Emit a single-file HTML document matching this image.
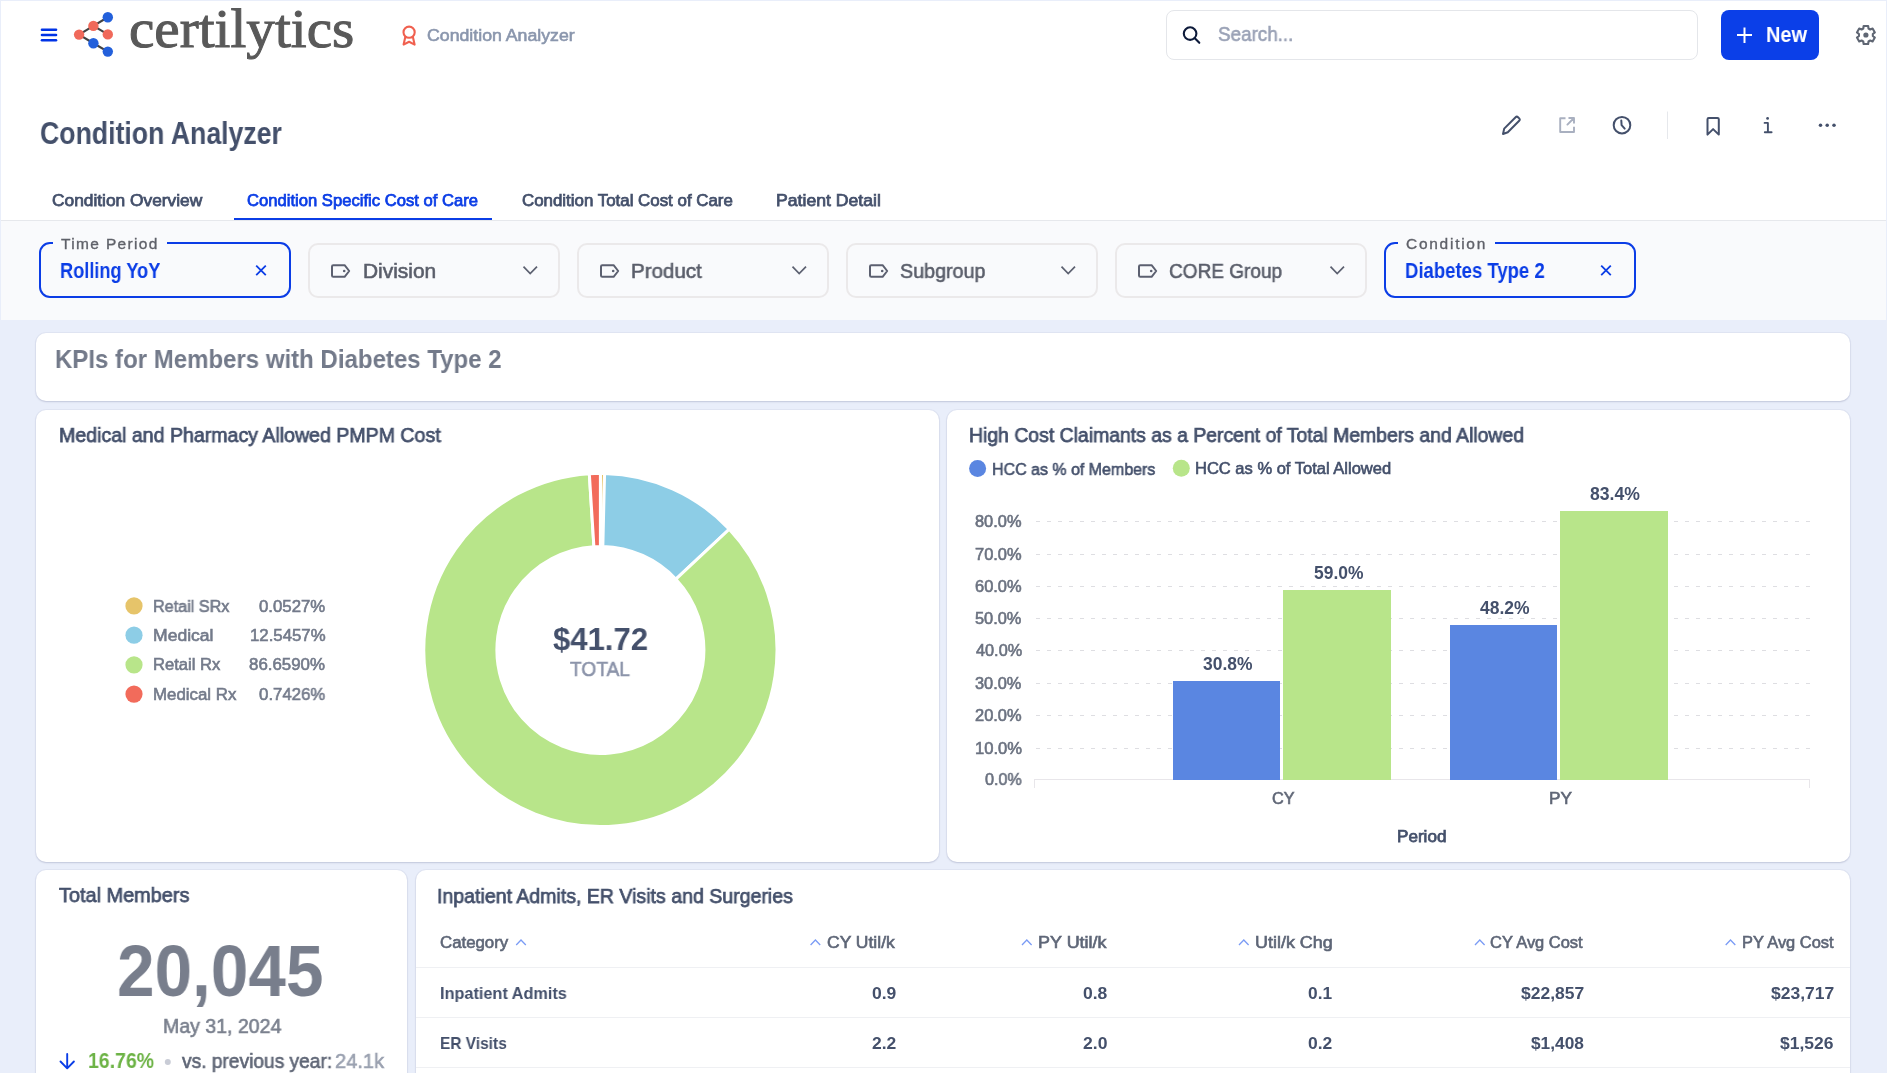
<!DOCTYPE html>
<html><head><meta charset="utf-8"><title>Condition Analyzer</title>
<style>

html,body{margin:0;padding:0;}
body{width:1887px;height:1073px;overflow:hidden;background:#e9eefa;position:relative;font-family:"Liberation Sans",sans-serif;}
.a{position:absolute;}
.t{position:absolute;white-space:nowrap;line-height:1;transform-origin:0 0;will-change:transform;}
.card{position:absolute;background:#fff;border-radius:10px;box-shadow:0 1px 2px rgba(30,40,90,0.16),0 0 0 1px rgba(30,40,90,0.035);}
svg{position:absolute;overflow:visible;}

</style></head><body>

<div class="a" style="left:1px;top:1px;width:1885px;height:219px;background:#fff;"></div>
<div class="a" style="left:1px;top:220px;width:1885px;height:1px;background:#e6e8ec;"></div>
<div class="a" style="left:1px;top:221px;width:1885px;height:99px;background:#f9fafc;"></div>
<!-- search -->
<div class="a" style="left:1166px;top:10px;width:530px;height:48px;border:1px solid #e4e6ea;border-radius:8px;background:#fff;"></div>
<div class="a" style="left:1721px;top:10px;width:98px;height:50px;border-radius:8px;background:#0b3fe8;"></div>
<!-- tab underline -->
<div class="a" style="left:234px;top:218px;width:258px;height:2px;background:#0b3de6;"></div>
<!-- filters -->
<div class="a" style="left:39px;top:242px;width:248px;height:52px;border:2px solid #0b3de6;border-radius:11px;"></div>
<div class="a" style="left:53px;top:240px;width:114px;height:5px;background:#f9fafc;"></div>
<div class="a" style="left:308px;top:243px;width:248px;height:51px;border:2px solid #ebe9ea;border-radius:10px;"></div>
<div class="a" style="left:577px;top:243px;width:248px;height:51px;border:2px solid #ebe9ea;border-radius:10px;"></div>
<div class="a" style="left:846px;top:243px;width:248px;height:51px;border:2px solid #ebe9ea;border-radius:10px;"></div>
<div class="a" style="left:1115px;top:243px;width:248px;height:51px;border:2px solid #ebe9ea;border-radius:10px;"></div>
<div class="a" style="left:1384px;top:242px;width:248px;height:52px;border:2px solid #0b3de6;border-radius:11px;"></div>
<div class="a" style="left:1398px;top:240px;width:97px;height:5px;background:#f9fafc;"></div>
<!-- cards -->
<div class="card" style="left:36px;top:333px;width:1814px;height:68px;"></div>
<div class="card" style="left:36px;top:410px;width:903px;height:452px;"></div>
<div class="card" style="left:947px;top:410px;width:903px;height:452px;"></div>
<div class="card" style="left:36px;top:870px;width:371px;height:320px;"></div>
<div class="card" style="left:416px;top:870px;width:1434px;height:320px;"></div>
<div class="a" style="left:416px;top:967px;width:1434px;height:1px;background:#eff0f3;"></div>
<div class="a" style="left:416px;top:1017px;width:1434px;height:1px;background:#eff0f3;"></div>
<div class="a" style="left:416px;top:1067px;width:1434px;height:1px;background:#eff0f3;"></div>
<svg class="a" style="left:0;top:0" width="1887" height="1073" viewBox="0 0 1887 1073"><path d="M600.40,473.35 A176.6,176.6 0 0 1 604.56,473.40 L602.84,546.48 A103.5,103.5 0 0 0 600.40,546.45 Z" fill="#e6c46a" stroke="#fff" stroke-width="3" stroke-linejoin="miter"/><path d="M604.56,473.40 A176.6,176.6 0 0 1 729.28,529.22 L675.93,579.19 A103.5,103.5 0 0 0 602.84,546.48 Z" fill="#8dcde6" stroke="#fff" stroke-width="3" stroke-linejoin="miter"/><path d="M729.28,529.22 A176.6,176.6 0 1 1 589.31,473.70 L593.90,546.65 A103.5,103.5 0 1 0 675.93,579.19 Z" fill="#b8e58a" stroke="#fff" stroke-width="3" stroke-linejoin="miter"/><path d="M589.31,473.70 A176.6,176.6 0 0 1 600.40,473.35 L600.40,546.45 A103.5,103.5 0 0 0 593.90,546.65 Z" fill="#f26b5b" stroke="#fff" stroke-width="3" stroke-linejoin="miter"/></svg>
<svg class="a" style="left:0;top:0" width="1887" height="1073" viewBox="0 0 1887 1073"><line x1="1036" y1="521.5" x2="1810" y2="521.5" stroke="#dedee2" stroke-width="1" stroke-dasharray="4 7"/><line x1="1036" y1="554.5" x2="1810" y2="554.5" stroke="#dedee2" stroke-width="1" stroke-dasharray="4 7"/><line x1="1036" y1="586.5" x2="1810" y2="586.5" stroke="#dedee2" stroke-width="1" stroke-dasharray="4 7"/><line x1="1036" y1="618.5" x2="1810" y2="618.5" stroke="#dedee2" stroke-width="1" stroke-dasharray="4 7"/><line x1="1036" y1="650.5" x2="1810" y2="650.5" stroke="#dedee2" stroke-width="1" stroke-dasharray="4 7"/><line x1="1036" y1="683.5" x2="1810" y2="683.5" stroke="#dedee2" stroke-width="1" stroke-dasharray="4 7"/><line x1="1036" y1="715.5" x2="1810" y2="715.5" stroke="#dedee2" stroke-width="1" stroke-dasharray="4 7"/><line x1="1036" y1="748.5" x2="1810" y2="748.5" stroke="#dedee2" stroke-width="1" stroke-dasharray="4 7"/><line x1="1034" y1="779.5" x2="1810" y2="779.5" stroke="#e8e6ea" stroke-width="1"/><line x1="1034.5" y1="779" x2="1034.5" y2="788" stroke="#e8e6ea" stroke-width="1"/><line x1="1809.5" y1="779" x2="1809.5" y2="788" stroke="#e8e6ea" stroke-width="1"/><rect x="1173" y="681" width="107" height="99" fill="#5a86e1"/><rect x="1283" y="590" width="108" height="190" fill="#b8e58a"/><rect x="1450" y="625" width="107" height="155" fill="#5a86e1"/><rect x="1560" y="511" width="108" height="269" fill="#b8e58a"/></svg>
<svg class="a" style="left:0;top:0" width="1887" height="1073" viewBox="0 0 1887 1073"><line x1="42" y1="29.8" x2="56" y2="29.8" stroke="#0033e6" stroke-width="2.6" stroke-linecap="round"/><line x1="42" y1="35.0" x2="56" y2="35.0" stroke="#0033e6" stroke-width="2.6" stroke-linecap="round"/><line x1="42" y1="40.3" x2="56" y2="40.3" stroke="#0033e6" stroke-width="2.6" stroke-linecap="round"/><line x1="107.8" y1="17.3" x2="93.4" y2="25.9" stroke="#424242" stroke-width="2.2"/><line x1="93.4" y1="25.9" x2="79.1" y2="34.6" stroke="#424242" stroke-width="2.2"/><line x1="93.4" y1="25.9" x2="107.8" y2="34.4" stroke="#424242" stroke-width="2.2"/><line x1="79.1" y1="34.6" x2="93.4" y2="43.2" stroke="#424242" stroke-width="2.2"/><line x1="93.4" y1="43.2" x2="107.8" y2="51.6" stroke="#424242" stroke-width="2.2"/><circle cx="107.8" cy="17.3" r="5.2" fill="#2360db"/><circle cx="93.4" cy="25.9" r="5.2" fill="#f0695a"/><circle cx="79.1" cy="34.6" r="5.2" fill="#f0695a"/><circle cx="107.8" cy="34.4" r="5.2" fill="#f0695a"/><circle cx="93.4" cy="43.2" r="5.2" fill="#2360db"/><circle cx="107.8" cy="51.6" r="5.2" fill="#2360db"/><circle cx="409.1" cy="32.2" r="5.6" fill="none" stroke="#f0604f" stroke-width="2.1"/><path d="M405.3,37 L403.6,44.6 L409.1,41.8 L414.6,44.6 L412.9,37" fill="none" stroke="#f0604f" stroke-width="2.1" stroke-linejoin="round" stroke-linecap="round"/><circle cx="1190.1" cy="33.6" r="6.3" fill="none" stroke="#0d1a3a" stroke-width="2.1"/><line x1="1194.8" y1="38.3" x2="1199.3" y2="42.8" stroke="#0d1a3a" stroke-width="2.1" stroke-linecap="round"/><line x1="1737" y1="35" x2="1752" y2="35" stroke="#fff" stroke-width="2" /><line x1="1744.5" y1="27.5" x2="1744.5" y2="43" stroke="#fff" stroke-width="2" /><path d="M1863.65,25.98 L1868.15,25.98 L1868.52,28.51 L1870.21,29.48 L1872.59,28.54 L1874.84,32.44 L1872.83,34.03 L1872.83,35.97 L1874.84,37.56 L1872.59,41.46 L1870.21,40.52 L1868.52,41.49 L1868.15,44.02 L1863.65,44.02 L1863.28,41.49 L1861.59,40.52 L1859.21,41.46 L1856.96,37.56 L1858.97,35.97 L1858.97,34.03 L1856.96,32.44 L1859.21,28.54 L1861.59,29.48 L1863.28,28.51 Z" fill="none" stroke="#5f6673" stroke-width="2.1" stroke-linejoin="round"/><circle cx="1865.9" cy="35.0" r="2.6" fill="#5f6673"/><path d="M1503,134 L1504.2,128.6 L1515.6,117.2 Q1516.8,116 1518,117.2 L1519.2,118.4 Q1520.4,119.6 1519.2,120.8 L1507.8,132.2 Z" fill="none" stroke="#44506b" stroke-width="2" stroke-linejoin="round"/><path d="M1565.5,118.2 L1560.2,118.2 L1560.2,132 L1574,132 L1574,126.7" fill="none" stroke="#a9b0c0" stroke-width="1.9" stroke-linejoin="round"/><path d="M1567.4,124.6 L1574,118 M1569.2,118 L1574,118 L1574,122.8" fill="none" stroke="#a9b0c0" stroke-width="1.9" stroke-linecap="round" stroke-linejoin="round"/><circle cx="1622" cy="125.2" r="8.3" fill="none" stroke="#44506b" stroke-width="2"/><path d="M1621.3,120.5 L1621.6,125.2 L1624.7,128.6" fill="none" stroke="#44506b" stroke-width="2" stroke-linecap="round" stroke-linejoin="round"/><line x1="1667.5" y1="111.5" x2="1667.5" y2="139" stroke="#e6e8ec" stroke-width="1"/><path d="M1707.5,134.6 L1707.5,119.2 Q1707.5,117.9 1708.8,117.9 L1717.5,117.9 Q1718.8,117.9 1718.8,119.2 L1718.8,134.6 L1713.1,129.1 Z" fill="none" stroke="#44506b" stroke-width="2" stroke-linejoin="round"/><circle cx="1767.6" cy="118.4" r="1.4" fill="#44506b"/><path d="M1764.6,122.9 L1767.9,122.9 L1767.9,132.3 M1764.8,132.3 L1771.6,132.3" fill="none" stroke="#44506b" stroke-width="1.9" stroke-linecap="round" stroke-linejoin="round"/><circle cx="1820.5" cy="125.2" r="1.75" fill="#44506b"/><circle cx="1827.2" cy="125.2" r="1.75" fill="#44506b"/><circle cx="1834.0" cy="125.2" r="1.75" fill="#44506b"/><path d="M333.3,265.2 L344.6,265.2 L349.2,271 L344.6,276.8 L333.3,276.8 Q332,276.8 332,275.5 L332,266.5 Q332,265.2 333.3,265.2 Z" fill="none" stroke="#5c6070" stroke-width="2" stroke-linejoin="round"/><circle cx="344.2" cy="271" r="1.3" fill="#5c6070"/><path d="M523.5,266.6 L530.2,273.6 L537,266.6" fill="none" stroke="#5c6070" stroke-width="1.7"/><path d="M602.3,265.2 L613.6,265.2 L618.2,271 L613.6,276.8 L602.3,276.8 Q601,276.8 601,275.5 L601,266.5 Q601,265.2 602.3,265.2 Z" fill="none" stroke="#5c6070" stroke-width="2" stroke-linejoin="round"/><circle cx="613.2" cy="271" r="1.3" fill="#5c6070"/><path d="M792.5,266.6 L799.2,273.6 L806,266.6" fill="none" stroke="#5c6070" stroke-width="1.7"/><path d="M871.3,265.2 L882.6,265.2 L887.2,271 L882.6,276.8 L871.3,276.8 Q870,276.8 870,275.5 L870,266.5 Q870,265.2 871.3,265.2 Z" fill="none" stroke="#5c6070" stroke-width="2" stroke-linejoin="round"/><circle cx="882.2" cy="271" r="1.3" fill="#5c6070"/><path d="M1061.5,266.6 L1068.2,273.6 L1075,266.6" fill="none" stroke="#5c6070" stroke-width="1.7"/><path d="M1140.3,265.2 L1151.6,265.2 L1156.2,271 L1151.6,276.8 L1140.3,276.8 Q1139,276.8 1139,275.5 L1139,266.5 Q1139,265.2 1140.3,265.2 Z" fill="none" stroke="#5c6070" stroke-width="2" stroke-linejoin="round"/><circle cx="1151.2" cy="271" r="1.3" fill="#5c6070"/><path d="M1330.5,266.6 L1337.2,273.6 L1344,266.6" fill="none" stroke="#5c6070" stroke-width="1.7"/><path d="M256.2,265.6 L265.8,275.2 M265.8,265.6 L256.2,275.2" stroke="#0b3de6" stroke-width="1.8"/><path d="M1601.2,265.6 L1610.8,275.2 M1610.8,265.6 L1601.2,275.2" stroke="#0b3de6" stroke-width="1.8"/><circle cx="134" cy="605.9" r="8.6" fill="#e6c46a"/><circle cx="134" cy="635.2" r="8.6" fill="#8dcde6"/><circle cx="134" cy="664.8" r="8.6" fill="#b8e58a"/><circle cx="134" cy="694.1" r="8.6" fill="#f26b5b"/><circle cx="977.6" cy="468.4" r="8.5" fill="#5a86e1"/><circle cx="1181.3" cy="468.3" r="8.5" fill="#b8e58a"/><path d="M67.2,1054 L67.2,1068 M60.5,1061.5 L67.2,1068.3 L73.9,1061.5" fill="none" stroke="#0b3de6" stroke-width="1.9" stroke-linecap="round" stroke-linejoin="round"/><circle cx="167.8" cy="1062" r="3" fill="#c9ccd6"/><path d="M516.2,945 L521.0,940 L525.8000000000001,945" fill="none" stroke="#7b9cf5" stroke-width="1.3"/><path d="M810.6,945 L815.4,940 L820.2,945" fill="none" stroke="#7b9cf5" stroke-width="1.3"/><path d="M1022.0,945 L1026.8,940 L1031.6,945" fill="none" stroke="#7b9cf5" stroke-width="1.3"/><path d="M1239.0,945 L1243.8,940 L1248.6,945" fill="none" stroke="#7b9cf5" stroke-width="1.3"/><path d="M1475.0,945 L1479.8,940 L1484.6,945" fill="none" stroke="#7b9cf5" stroke-width="1.3"/><path d="M1725.7,945 L1730.5,940 L1735.3,945" fill="none" stroke="#7b9cf5" stroke-width="1.3"/></svg>

<div class="t" id="t0" style="font-family:'Liberation Serif', serif;font-size:54.50px;font-weight:400;color:#595959;top:2.10px;-webkit-text-stroke:1.0px #595959;left:129.32px;transform:scaleX(1.0482);">certilytics</div>
<div class="t" id="t1" style="font-family:'Liberation Sans', sans-serif;font-size:16.57px;font-weight:400;color:#8a96ad;top:27.50px;-webkit-text-stroke:0.6px #8a96ad;left:426.70px;transform:scaleX(1.0694);">Condition Analyzer</div>
<div class="t" id="t2" style="font-family:'Liberation Sans', sans-serif;font-size:20.64px;font-weight:400;color:#9aa2b6;top:24.40px;-webkit-text-stroke:0.6px #9aa2b6;left:1218.44px;transform:scaleX(0.9131);">Search...</div>
<div class="t" id="t3" style="font-family:'Liberation Sans', sans-serif;font-size:21.51px;font-weight:700;color:#ffffff;top:25.00px;left:1765.87px;transform:scaleX(0.9271);">New</div>
<div class="t" id="t4" style="font-family:'Liberation Sans', sans-serif;font-size:30.52px;font-weight:700;color:#44506b;top:118.00px;left:39.51px;transform:scaleX(0.8736);">Condition Analyzer</div>
<div class="t" id="t5" style="font-family:'Liberation Sans', sans-serif;font-size:16.64px;font-weight:400;color:#44506b;top:193.43px;-webkit-text-stroke:0.75px #44506b;left:52.29px;transform:scaleX(1.0425);">Condition Overview</div>
<div class="t" id="t6" style="font-family:'Liberation Sans', sans-serif;font-size:16.50px;font-weight:400;color:#0b3de6;top:192.32px;-webkit-text-stroke:0.75px #0b3de6;left:247.33px;transform:scaleX(1.0072);">Condition Specific Cost of Care</div>
<div class="t" id="t7" style="font-family:'Liberation Sans', sans-serif;font-size:16.50px;font-weight:400;color:#44506b;top:192.32px;-webkit-text-stroke:0.75px #44506b;left:521.52px;transform:scaleX(1.0233);">Condition Total Cost of Care</div>
<div class="t" id="t8" style="font-family:'Liberation Sans', sans-serif;font-size:16.50px;font-weight:400;color:#44506b;top:192.32px;-webkit-text-stroke:0.75px #44506b;left:775.63px;transform:scaleX(1.0686);">Patient Detail</div>
<div class="t" id="t9" style="font-family:'Liberation Sans', sans-serif;font-size:15.48px;font-weight:400;color:#5f6169;top:235.72px;-webkit-text-stroke:0.35px #5f6169;letter-spacing:1.359px;left:61.03px;transform:scaleX(1.0000);">Time Period</div>
<div class="t" id="t10" style="font-family:'Liberation Sans', sans-serif;font-size:21.37px;font-weight:700;color:#0b3de6;top:260.70px;left:60.38px;transform:scaleX(0.8510);">Rolling YoY</div>
<div class="t" id="t11" style="font-family:'Liberation Sans', sans-serif;font-size:20.93px;font-weight:400;color:#5a5e6a;top:260.70px;-webkit-text-stroke:0.6px #5a5e6a;left:362.88px;transform:scaleX(0.9989);">Division</div>
<div class="t" id="t12" style="font-family:'Liberation Sans', sans-serif;font-size:20.93px;font-weight:400;color:#5a5e6a;top:260.70px;-webkit-text-stroke:0.6px #5a5e6a;left:630.61px;transform:scaleX(0.9824);">Product</div>
<div class="t" id="t13" style="font-family:'Liberation Sans', sans-serif;font-size:20.93px;font-weight:400;color:#5a5e6a;top:260.70px;-webkit-text-stroke:0.6px #5a5e6a;left:899.80px;transform:scaleX(0.9424);">Subgroup</div>
<div class="t" id="t14" style="font-family:'Liberation Sans', sans-serif;font-size:20.93px;font-weight:400;color:#5a5e6a;top:260.70px;-webkit-text-stroke:0.6px #5a5e6a;left:1168.73px;transform:scaleX(0.9087);">CORE Group</div>
<div class="t" id="t15" style="font-family:'Liberation Sans', sans-serif;font-size:15.48px;font-weight:400;color:#5f6169;top:235.72px;-webkit-text-stroke:0.35px #5f6169;letter-spacing:1.743px;left:1405.59px;transform:scaleX(1.0000);">Condition</div>
<div class="t" id="t16" style="font-family:'Liberation Sans', sans-serif;font-size:21.37px;font-weight:700;color:#0b3de6;top:260.70px;left:1405.16px;transform:scaleX(0.8673);">Diabetes Type 2</div>
<div class="t" id="t17" style="font-family:'Liberation Sans', sans-serif;font-size:26.45px;font-weight:700;color:#737a8a;top:346.10px;left:54.89px;transform:scaleX(0.9082);">KPIs for Members with Diabetes Type 2</div>
<div class="t" id="t18" style="font-family:'Liberation Sans', sans-serif;font-size:20.42px;font-weight:400;color:#44506b;top:425.43px;-webkit-text-stroke:0.75px #44506b;left:58.52px;transform:scaleX(0.9587);">Medical and Pharmacy Allowed PMPM Cost</div>
<div class="t" id="t19" style="font-family:'Liberation Sans', sans-serif;font-size:16.42px;font-weight:400;color:#737a8a;top:598.30px;-webkit-text-stroke:0.6px #737a8a;left:153.47px;transform:scaleX(0.9858);">Retail SRx</div>
<div class="t" id="t20" style="font-family:'Liberation Sans', sans-serif;font-size:16.42px;font-weight:400;color:#737a8a;top:598.30px;-webkit-text-stroke:0.6px #737a8a;left:259.04px;transform:scaleX(1.0227);">0.0527%</div>
<div class="t" id="t21" style="font-family:'Liberation Sans', sans-serif;font-size:16.42px;font-weight:400;color:#737a8a;top:627.40px;-webkit-text-stroke:0.6px #737a8a;left:153.36px;transform:scaleX(1.0702);">Medical</div>
<div class="t" id="t22" style="font-family:'Liberation Sans', sans-serif;font-size:16.42px;font-weight:400;color:#737a8a;top:627.40px;-webkit-text-stroke:0.6px #737a8a;left:249.72px;transform:scaleX(1.0226);">12.5457%</div>
<div class="t" id="t23" style="font-family:'Liberation Sans', sans-serif;font-size:16.28px;font-weight:400;color:#737a8a;top:656.30px;-webkit-text-stroke:0.6px #737a8a;left:153.44px;transform:scaleX(1.0206);">Retail Rx</div>
<div class="t" id="t24" style="font-family:'Liberation Sans', sans-serif;font-size:16.28px;font-weight:400;color:#737a8a;top:656.30px;-webkit-text-stroke:0.6px #737a8a;left:249.37px;transform:scaleX(1.0364);">86.6590%</div>
<div class="t" id="t25" style="font-family:'Liberation Sans', sans-serif;font-size:16.86px;font-weight:400;color:#737a8a;top:687.40px;-webkit-text-stroke:0.6px #737a8a;left:153.42px;transform:scaleX(0.9972);">Medical Rx</div>
<div class="t" id="t26" style="font-family:'Liberation Sans', sans-serif;font-size:16.86px;font-weight:400;color:#737a8a;top:687.40px;-webkit-text-stroke:0.6px #737a8a;left:259.04px;transform:scaleX(0.9954);">0.7426%</div>
<div class="t" id="t27" style="font-family:'Liberation Sans', sans-serif;font-size:31.83px;font-weight:700;color:#44506b;top:623.90px;left:553.29px;transform:scaleX(0.9753);">$41.72</div>
<div class="t" id="t28" style="font-family:'Liberation Sans', sans-serif;font-size:20.35px;font-weight:400;color:#8c94aa;top:658.50px;-webkit-text-stroke:0.6px #8c94aa;left:570.17px;transform:scaleX(0.9432);">TOTAL</div>
<div class="t" id="t29" style="font-family:'Liberation Sans', sans-serif;font-size:20.42px;font-weight:400;color:#44506b;top:425.43px;-webkit-text-stroke:0.75px #44506b;left:969.08px;transform:scaleX(0.9507);">High Cost Claimants as a Percent of Total Members and Allowed</div>
<div class="t" id="t30" style="font-family:'Liberation Sans', sans-serif;font-size:16.57px;font-weight:400;color:#44506b;top:461.60px;-webkit-text-stroke:0.6px #44506b;left:991.89px;transform:scaleX(0.9647);">HCC as % of Members</div>
<div class="t" id="t31" style="font-family:'Liberation Sans', sans-serif;font-size:16.28px;font-weight:400;color:#44506b;top:460.20px;-webkit-text-stroke:0.6px #44506b;left:1194.84px;transform:scaleX(1.0153);">HCC as % of Total Allowed</div>
<div class="t" id="t32" style="font-family:'Liberation Sans', sans-serif;font-size:16.28px;font-weight:400;color:#6b7280;top:770.90px;-webkit-text-stroke:0.6px #6b7280;left:984.97px;transform:scaleX(0.9927);">0.0%</div>
<div class="t" id="t33" style="font-family:'Liberation Sans', sans-serif;font-size:16.28px;font-weight:400;color:#6b7280;top:739.90px;-webkit-text-stroke:0.6px #6b7280;left:974.73px;transform:scaleX(1.0202);">10.0%</div>
<div class="t" id="t34" style="font-family:'Liberation Sans', sans-serif;font-size:16.28px;font-weight:400;color:#6b7280;top:706.90px;-webkit-text-stroke:0.6px #6b7280;left:975.17px;transform:scaleX(1.0106);">20.0%</div>
<div class="t" id="t35" style="font-family:'Liberation Sans', sans-serif;font-size:16.28px;font-weight:400;color:#6b7280;top:674.90px;-webkit-text-stroke:0.6px #6b7280;left:975.38px;transform:scaleX(1.0061);">30.0%</div>
<div class="t" id="t36" style="font-family:'Liberation Sans', sans-serif;font-size:16.28px;font-weight:400;color:#6b7280;top:641.90px;-webkit-text-stroke:0.6px #6b7280;left:975.63px;transform:scaleX(1.0006);">40.0%</div>
<div class="t" id="t37" style="font-family:'Liberation Sans', sans-serif;font-size:16.28px;font-weight:400;color:#6b7280;top:609.90px;-webkit-text-stroke:0.6px #6b7280;left:975.34px;transform:scaleX(1.0068);">50.0%</div>
<div class="t" id="t38" style="font-family:'Liberation Sans', sans-serif;font-size:16.28px;font-weight:400;color:#6b7280;top:577.90px;-webkit-text-stroke:0.6px #6b7280;left:975.16px;transform:scaleX(1.0108);">60.0%</div>
<div class="t" id="t39" style="font-family:'Liberation Sans', sans-serif;font-size:16.28px;font-weight:400;color:#6b7280;top:545.90px;-webkit-text-stroke:0.6px #6b7280;left:975.16px;transform:scaleX(1.0110);">70.0%</div>
<div class="t" id="t40" style="font-family:'Liberation Sans', sans-serif;font-size:16.28px;font-weight:400;color:#6b7280;top:512.90px;-webkit-text-stroke:0.6px #6b7280;left:975.29px;transform:scaleX(1.0081);">80.0%</div>
<div class="t" id="t41" style="font-family:'Liberation Sans', sans-serif;font-size:17.44px;font-weight:700;color:#44506b;top:656.10px;left:1203.40px;transform:scaleX(0.9940);">30.8%</div>
<div class="t" id="t42" style="font-family:'Liberation Sans', sans-serif;font-size:17.44px;font-weight:700;color:#44506b;top:565.00px;left:1313.96px;transform:scaleX(0.9988);">59.0%</div>
<div class="t" id="t43" style="font-family:'Liberation Sans', sans-serif;font-size:17.44px;font-weight:700;color:#44506b;top:600.00px;left:1479.94px;transform:scaleX(1.0035);">48.2%</div>
<div class="t" id="t44" style="font-family:'Liberation Sans', sans-serif;font-size:17.44px;font-weight:700;color:#44506b;top:485.70px;left:1590.44px;transform:scaleX(1.0095);">83.4%</div>
<div class="t" id="t45" style="font-family:'Liberation Sans', sans-serif;font-size:16.28px;font-weight:400;color:#5f6676;top:789.90px;-webkit-text-stroke:0.6px #5f6676;left:1272.48px;transform:scaleX(0.9942);">CY</div>
<div class="t" id="t46" style="font-family:'Liberation Sans', sans-serif;font-size:16.72px;font-weight:400;color:#5f6676;top:790.80px;-webkit-text-stroke:0.6px #5f6676;left:1548.99px;transform:scaleX(1.0312);">PY</div>
<div class="t" id="t47" style="font-family:'Liberation Sans', sans-serif;font-size:17.08px;font-weight:400;color:#44506b;top:828.12px;-webkit-text-stroke:0.75px #44506b;left:1397.07px;transform:scaleX(1.0016);">Period</div>
<div class="t" id="t48" style="font-family:'Liberation Sans', sans-serif;font-size:21.00px;font-weight:400;color:#44506b;top:884.33px;-webkit-text-stroke:0.75px #44506b;left:58.83px;transform:scaleX(0.9470);">Total Members</div>
<div class="t" id="t49" style="font-family:'Liberation Sans', sans-serif;font-size:71.80px;font-weight:700;color:#787e8c;top:935.90px;left:117.36px;transform:scaleX(0.9399);">20,045</div>
<div class="t" id="t50" style="font-family:'Liberation Sans', sans-serif;font-size:20.93px;font-weight:400;color:#7a808e;top:1015.50px;-webkit-text-stroke:0.6px #7a808e;left:162.50px;transform:scaleX(0.9337);">May 31, 2024</div>
<div class="t" id="t51" style="font-family:'Liberation Sans', sans-serif;font-size:21.80px;font-weight:700;color:#6db346;top:1050.00px;left:87.97px;transform:scaleX(0.8932);">16.76%</div>
<div class="t" id="t52" style="font-family:'Liberation Sans', sans-serif;font-size:19.48px;font-weight:400;color:#5f6676;top:1051.70px;-webkit-text-stroke:0.6px #5f6676;left:182.33px;transform:scaleX(0.9839);">vs. previous year:</div>
<div class="t" id="t53" style="font-family:'Liberation Sans', sans-serif;font-size:20.93px;font-weight:400;color:#9aa1b0;top:1050.70px;-webkit-text-stroke:0.6px #9aa1b0;left:334.99px;transform:scaleX(0.9588);">24.1k</div>
<div class="t" id="t54" style="font-family:'Liberation Sans', sans-serif;font-size:20.71px;font-weight:400;color:#44506b;top:885.73px;-webkit-text-stroke:0.75px #44506b;left:437.17px;transform:scaleX(0.9437);">Inpatient Admits, ER Visits and Surgeries</div>
<div class="t" id="t55" style="font-family:'Liberation Sans', sans-serif;font-size:15.99px;font-weight:400;color:#5e6677;top:935.30px;-webkit-text-stroke:0.6px #5e6677;left:440.15px;transform:scaleX(1.0513);">Category</div>
<div class="t" id="t56" style="font-family:'Liberation Sans', sans-serif;font-size:15.99px;font-weight:400;color:#5e6677;top:935.30px;-webkit-text-stroke:0.6px #5e6677;left:826.71px;transform:scaleX(1.0949);">CY Util/k</div>
<div class="t" id="t57" style="font-family:'Liberation Sans', sans-serif;font-size:15.99px;font-weight:400;color:#5e6677;top:935.30px;-webkit-text-stroke:0.6px #5e6677;left:1037.83px;transform:scaleX(1.1237);">PY Util/k</div>
<div class="t" id="t58" style="font-family:'Liberation Sans', sans-serif;font-size:15.99px;font-weight:400;color:#5e6677;top:935.30px;-webkit-text-stroke:0.6px #5e6677;left:1254.52px;transform:scaleX(1.1218);">Util/k Chg</div>
<div class="t" id="t59" style="font-family:'Liberation Sans', sans-serif;font-size:15.99px;font-weight:400;color:#5e6677;top:935.30px;-webkit-text-stroke:0.6px #5e6677;left:1490.46px;transform:scaleX(1.0290);">CY Avg Cost</div>
<div class="t" id="t60" style="font-family:'Liberation Sans', sans-serif;font-size:15.99px;font-weight:400;color:#5e6677;top:935.30px;-webkit-text-stroke:0.6px #5e6677;left:1741.55px;transform:scaleX(1.0270);">PY Avg Cost</div>
<div class="t" id="t61" style="font-family:'Liberation Sans', sans-serif;font-size:16.86px;font-weight:700;color:#44506b;top:985.60px;left:439.61px;transform:scaleX(0.9650);">Inpatient Admits</div>
<div class="t" id="t62" style="font-family:'Liberation Sans', sans-serif;font-size:16.86px;font-weight:700;color:#44506b;top:1035.60px;left:439.67px;transform:scaleX(0.9174);">ER Visits</div>
<div class="t" id="t63" style="font-family:'Liberation Sans', sans-serif;font-size:16.86px;font-weight:700;color:#44506b;top:985.60px;left:872.31px;transform:scaleX(1.0386);">0.9</div>
<div class="t" id="t64" style="font-family:'Liberation Sans', sans-serif;font-size:16.86px;font-weight:700;color:#44506b;top:985.60px;left:1082.91px;transform:scaleX(1.0381);">0.8</div>
<div class="t" id="t65" style="font-family:'Liberation Sans', sans-serif;font-size:16.86px;font-weight:700;color:#44506b;top:985.60px;left:1307.82px;transform:scaleX(1.0268);">0.1</div>
<div class="t" id="t66" style="font-family:'Liberation Sans', sans-serif;font-size:16.86px;font-weight:700;color:#44506b;top:985.60px;left:1520.87px;transform:scaleX(1.0368);">$22,857</div>
<div class="t" id="t67" style="font-family:'Liberation Sans', sans-serif;font-size:16.86px;font-weight:700;color:#44506b;top:985.60px;left:1770.77px;transform:scaleX(1.0385);">$23,717</div>
<div class="t" id="t68" style="font-family:'Liberation Sans', sans-serif;font-size:16.86px;font-weight:700;color:#44506b;top:1035.60px;left:872.39px;transform:scaleX(1.0371);">2.2</div>
<div class="t" id="t69" style="font-family:'Liberation Sans', sans-serif;font-size:16.86px;font-weight:700;color:#44506b;top:1035.60px;left:1082.99px;transform:scaleX(1.0424);">2.0</div>
<div class="t" id="t70" style="font-family:'Liberation Sans', sans-serif;font-size:16.86px;font-weight:700;color:#44506b;top:1035.60px;left:1307.81px;transform:scaleX(1.0364);">0.2</div>
<div class="t" id="t71" style="font-family:'Liberation Sans', sans-serif;font-size:16.86px;font-weight:700;color:#44506b;top:1035.60px;left:1530.97px;transform:scaleX(1.0248);">$1,408</div>
<div class="t" id="t72" style="font-family:'Liberation Sans', sans-serif;font-size:16.86px;font-weight:700;color:#44506b;top:1035.60px;left:1780.47px;transform:scaleX(1.0365);">$1,526</div>
</body></html>
